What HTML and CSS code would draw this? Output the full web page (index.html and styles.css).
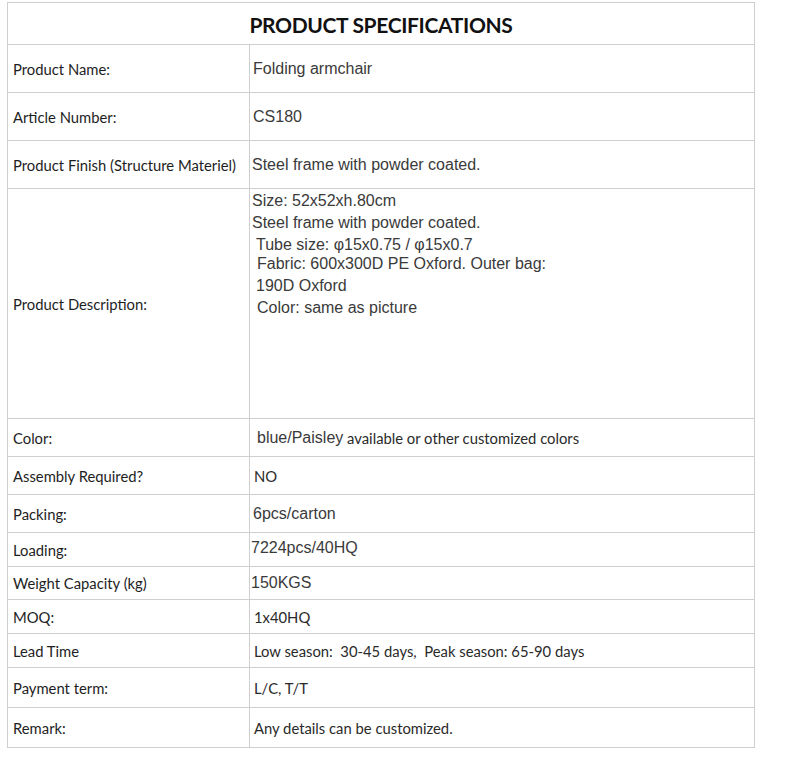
FILE: index.html
```html
<!DOCTYPE html>
<html lang="en">
<head>
<meta charset="utf-8">
<title>Product Specifications</title>
<link rel="stylesheet" href="styles.css">
</head>
<body>
<div class="spec">
  <div class="cell head">PRODUCT SPECIFICATIONS</div>

  <div class="cell label">Product Name:</div>
  <div class="cell value arial in-3">Folding armchair</div>

  <div class="cell label">Article Number:</div>
  <div class="cell value arial in-3">CS180</div>

  <div class="cell label">Product Finish (Structure Materiel)</div>
  <div class="cell value arial in-2">Steel frame with powder coated.</div>

  <div class="cell label">Product Description:</div>
  <div class="cell value arial desc">
    <div class="line in-2">Size: 52x52xh.80cm</div>
    <div class="line in-2">Steel frame with powder coated.</div>
    <div class="line in-6">Tube size: φ15x0.75 / φ15x0.7</div>
    <div class="line tight in-7">Fabric: 600x300D PE Oxford. Outer bag:</div>
    <div class="line in-6">190D Oxford</div>
    <div class="line in-7">Color: same as picture</div>
  </div>

  <div class="cell label">Color:</div>
  <div class="cell value in-8"><span class="arial">blue/Paisley</span>&nbsp;available or other customized colors</div>

  <div class="cell label">Assembly Required?</div>
  <div class="cell value in-4">NO</div>

  <div class="cell label">Packing:</div>
  <div class="cell value arial in-3">6pcs/carton</div>

  <div class="cell label">Loading:</div>
  <div class="cell value arial in-1 up">7224pcs/40HQ</div>

  <div class="cell label">Weight Capacity (kg)</div>
  <div class="cell value arial in-1">150KGS</div>

  <div class="cell label">MOQ:</div>
  <div class="cell value in-4">1x40HQ</div>

  <div class="cell label">Lead Time</div>
  <div class="cell value in-4">Low season:&nbsp; 30-45 days,&nbsp; Peak season: 65-90 days</div>

  <div class="cell label">Payment term:</div>
  <div class="cell value in-4">L/C, T/T</div>

  <div class="cell label">Remark:</div>
  <div class="cell value in-4">Any details can be customized.</div>
</div>
</body>
</html>
```

FILE: styles.css
```css
html, body {
  background: #ffffff;
}

body {
  margin: 2px 0 0 7px;
  font-family: Lato, "Open Sans", sans-serif;
  font-size: 14.8px;
  color: #1e1e1e;
}

.spec {
  display: grid;
  grid-template-columns: 242px 505px;
  grid-template-rows: 42px 48px 48px 48px 230px 38px 38px 38px 34px 33px 34px 34px 40px 40px;
  width: 748px;
  box-sizing: border-box;
  border-top: 1px solid #cfcfcf;
  border-left: 1px solid #cfcfcf;
}

.cell {
  box-sizing: border-box;
  border-right: 1px solid #cfcfcf;
  border-bottom: 1px solid #cfcfcf;
  display: flex;
  align-items: center;
  white-space: nowrap;
}

.head {
  grid-column: 1 / span 2;
  justify-content: center;
  font-weight: 700;
  font-size: 21px;
  letter-spacing: -0.35px;
  color: #111;
  padding-top: 1px;
}

.label {
  padding-left: 5px;
}

.value {
  color: #2a2a2a;
}

.arial {
  font-family: "Liberation Sans", Arial, sans-serif;
  font-size: 16px;
  color: #3a3a3a;
}

.desc {
  flex-direction: column;
  align-items: flex-start;
  justify-content: flex-start;
  padding-top: 1px;
}

.line {
  line-height: 22px;
}

.tight {
  margin-top: -3px;
}

.up {
  padding-bottom: 4px;
}

.in-1 { padding-left: 1px; }
.in-2 { padding-left: 2px; }
.in-3 { padding-left: 3px; }
.in-4 { padding-left: 4px; }
.in-6 { padding-left: 6px; }
.in-7 { padding-left: 7px; }
.in-8 { padding-left: 7px; }
```
